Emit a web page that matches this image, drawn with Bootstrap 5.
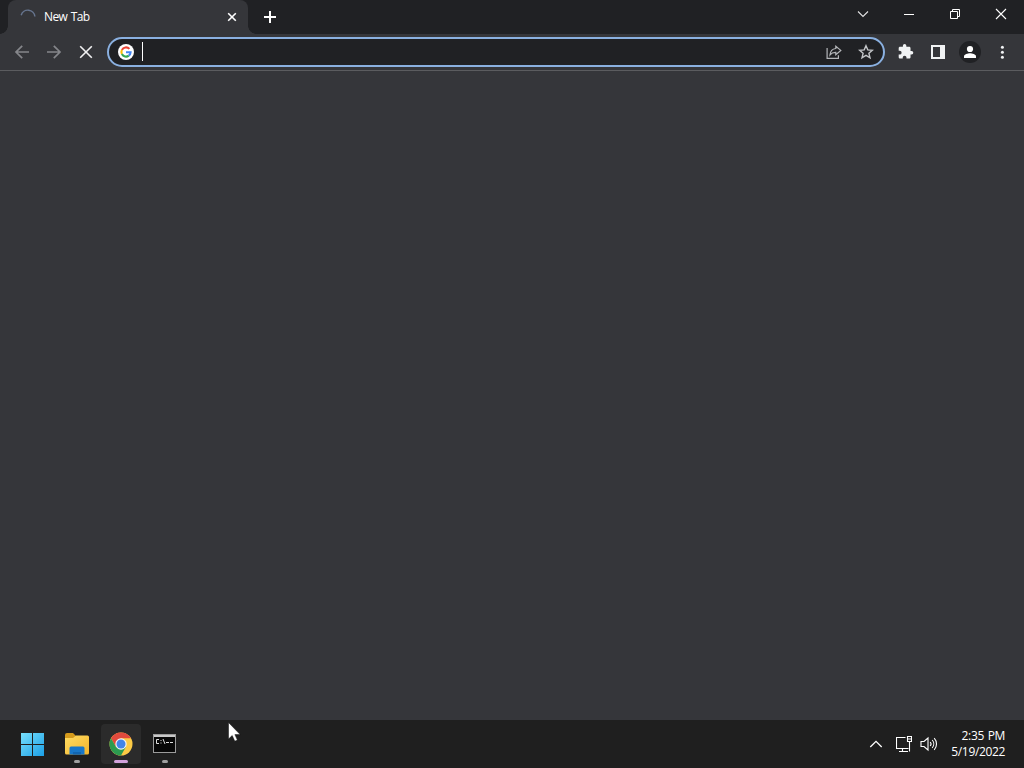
<!DOCTYPE html>
<html lang="en">
<head>
    <meta charset="UTF-8">
    <meta name="viewport" content="width=device-width, initial-scale=1.0">
    <title>New Tab</title>
    <link rel="stylesheet" href="https://cdn.jsdelivr.net/npm/bootstrap@5.3.0/dist/css/bootstrap.min.css">
    <style>
        body {
            height: 100vh;
            background: #35363a;
            font-family: "Open Sans", "Noto Sans", sans-serif;
            font-size: 12px;
            color: #fff;
            overflow: hidden;
        }
        svg {
            display: block;
            flex: none;
        }
        .tab-strip {
            height: 34px;
            background: #202124;
            padding-left: 8px;
        }
        .browser-tab {
            position: relative;
            width: 240px;
            height: 34px;
            padding: 0 9px 0 12px;
            background: #35363a;
            border-radius: 8px 8px 0 0;
        }
        /* curved feet of the active tab */
        .browser-tab::before,
        .browser-tab::after {
            content: "";
            position: absolute;
            bottom: 0;
            width: 8px;
            height: 8px;
        }
        .browser-tab::before {
            left: -8px;
            background: radial-gradient(circle at 0 0, transparent 7.5px, #35363a 8px);
        }
        .browser-tab::after {
            right: -8px;
            background: radial-gradient(circle at 100% 0, transparent 7.5px, #35363a 8px);
        }
        .tab-title {
            margin-left: 8px;
            font-size: 12px;
            line-height: 16px;
            letter-spacing: -0.6px;
            word-spacing: 1px;
        }
        .win-btn {
            width: 46px;
            height: 28px;
        }
        .toolbar {
            height: 37px;
            padding: 0 6px;
            border-bottom: 1px solid #5b5c5f;
        }
        .tool-btn {
            width: 32px;
            height: 32px;
        }
        .omnibox {
            height: 30px;
            margin: 0 5px;
            padding: 0 1px 0 9px;
            background: #202124;
            border: 2px solid #8ab0e0;
            border-radius: 15px;
        }
        .caret {
            width: 1px;
            height: 19px;
            margin: 0 0 2px 8px;
            background: #fff;
        }
        .taskbar {
            height: 48px;
            padding: 0 19px 0 11px;
            background: #1f1f1f;
        }
        .task-btn {
            position: relative;
            width: 44px;
            height: 48px;
        }
        .task-btn.active::before {
            content: "";
            position: absolute;
            inset: 4px 2px;
            background: #2b2b2b;
            border-radius: 4px;
        }
        .task-btn svg {
            position: relative;
        }
        .run-mark {
            position: absolute;
            bottom: 5px;
            left: 19px;
            width: 6px;
            height: 3px;
            background: #a0a0a0;
            border-radius: 2px;
        }
        .active .run-mark {
            left: 15px;
            width: 14px;
            background: #d3a2dc;
        }
        .tray-icons {
            margin: 0 12px 0 13px;
        }
        .clock {
            width: 55px;
            font-size: 12px;
            line-height: 16px;
            letter-spacing: -0.35px;
            word-spacing: 1px;
            white-space: nowrap;
        }
        .mouse-pointer {
            position: absolute;
            left: 228px;
            top: 722px;
        }
    </style>
</head>
<body class="d-flex flex-column">
    <header class="tab-strip d-flex">
        <div class="browser-tab d-flex align-items-center">
            <svg width="16" height="16" viewBox="0 0 16 16" fill="none" stroke="#66758f" stroke-width="1.5"><path d="M1.2 6.2A7 7 0 0 1 14.9 7.5"/></svg>
            <span class="tab-title">New Tab</span>
            <svg class="ms-auto" width="14" height="14" viewBox="0 0 14 14" stroke="#fff" stroke-width="1.6"><path d="M3.2 3.2l7.6 7.6M10.8 3.2l-7.6 7.6"/></svg>
        </div>
        <div class="d-flex align-items-center ms-3">
            <svg width="12" height="34" viewBox="0 0 12 34" stroke="#fff" stroke-width="2"><path d="M0 17h12M6 11v12"/></svg>
        </div>
        <div class="d-flex ms-auto">
            <div class="win-btn d-flex align-items-center justify-content-center">
                <svg width="12" height="12" viewBox="0 0 12 12" fill="none" stroke="#e2e2e3" stroke-width="1.1"><path d="M1 3.5l5 5 5-5"/></svg>
            </div>
            <div class="win-btn d-flex align-items-center justify-content-center">
                <svg width="10" height="10" viewBox="0 0 10 10" stroke="#fff"><path d="M0 5.5h10"/></svg>
            </div>
            <div class="win-btn d-flex align-items-center justify-content-center">
                <svg width="10" height="10" viewBox="0 0 10 10" fill="none" stroke="#fff"><path d="M.5 2.5h7v7h-7zM2.5 2.5v-2h7v7h-2"/></svg>
            </div>
            <div class="win-btn d-flex align-items-center justify-content-center">
                <svg width="12" height="12" viewBox="0 0 12 12" stroke="#fff" stroke-width="1.1"><path d="M1 1l10 10M11 1L1 11"/></svg>
            </div>
        </div>
    </header>

    <nav class="toolbar d-flex align-items-center">
        <div class="tool-btn d-flex align-items-center justify-content-center">
            <svg width="16" height="16" viewBox="0 0 16 16" fill="none" stroke="#85868a" stroke-width="1.7"><path d="M15 8H2.2M8.2 1.8L2 8l6.2 6.2"/></svg>
        </div>
        <div class="tool-btn d-flex align-items-center justify-content-center">
            <svg width="16" height="16" viewBox="0 0 16 16" fill="none" stroke="#85868a" stroke-width="1.7"><path d="M1 8h12.8M7.8 1.8L14 8l-6.2 6.2"/></svg>
        </div>
        <div class="tool-btn d-flex align-items-center justify-content-center">
            <svg width="16" height="16" viewBox="0 0 16 16" stroke="#f1f1f2" stroke-width="1.6"><path d="M2.2 2.2l11.6 11.6M13.8 2.2L2.2 13.8"/></svg>
        </div>

        <div class="omnibox flex-grow-1 d-flex align-items-center">
            <svg width="16" height="16" viewBox="0 0 16 16" fill="none" stroke-width="2.1">
                <circle cx="8" cy="8" r="8" fill="#fff"/>
                <path d="M11.4 4.9A4.6 4.6 0 0 0 3.9 5.9" stroke="#ea4335"/>
                <path d="M3.9 5.9a4.6 4.6 0 0 0 0 4.2" stroke="#fbbc05"/>
                <path d="M3.9 10.1a4.6 4.6 0 0 0 6.9 1.5" stroke="#34a853"/>
                <path d="M10.8 11.6a4.6 4.6 0 0 0 1.8-3.4H8" stroke="#4285f4"/>
            </svg>
            <span class="caret"></span>
            <div class="d-flex ms-auto">
                <div class="tool-btn d-flex align-items-center justify-content-center">
                    <svg width="16" height="16" viewBox="0 0 16 16" fill="none" stroke="#b4b6b9" stroke-width="1.2"><path d="M1.1 4v10.4h11.3v-3.2M9.8 2.2L14.8 6.4 9.8 10.6V8.3C7.2 8.2 5.4 9 4 10.9 4.3 7.2 6.2 4.9 9.8 4.5z"/></svg>
                </div>
                <div class="tool-btn d-flex align-items-center justify-content-center">
                    <svg width="16" height="16" viewBox="0 0 16 16" fill="none" stroke="#c4c6c9" stroke-width="1.4"><path d="M8 1.7l1.8 4.2 4.6.4-3.5 3 1.1 4.5L8 11.4l-4 2.4 1.1-4.5-3.5-3 4.6-.4z"/></svg>
                </div>
            </div>
        </div>

        <div class="tool-btn d-flex align-items-center justify-content-center">
            <svg width="16" height="16" viewBox="1 1 23 23" fill="#f1f3f4"><path d="M20.5 11H19V7c0-1.1-.9-2-2-2h-4V3.5a2.5 2.5 0 0 0-5 0V5H4c-1.1 0-2 .9-2 2v3.8h1.5a2.7 2.7 0 0 1 0 5.4H2V20c0 1.1.9 2 2 2h3.8v-1.5a2.7 2.7 0 0 1 5.4 0V22H17c1.1 0 2-.9 2-2v-4h1.5a2.5 2.5 0 0 0 0-5z"/></svg>
        </div>
        <div class="tool-btn d-flex align-items-center justify-content-center">
            <svg width="14" height="14" viewBox="0 0 14 14"><path fill="#f1f3f4" fill-rule="evenodd" d="M0 0h14v14H0zM2 2v10h7V2z"/></svg>
        </div>
        <div class="tool-btn d-flex align-items-center justify-content-center">
            <svg width="22" height="22" viewBox="0 0 22 22"><circle cx="11" cy="11" r="11" fill="#202124"/><g fill="#fff"><circle cx="11" cy="8" r="3.1"/><path d="M5 17v-1.6c0-2.1 3.9-3.1 6-3.1s6 1 6 3.1V17z"/></g></svg>
        </div>
        <div class="tool-btn d-flex align-items-center justify-content-center">
            <svg width="4" height="14" viewBox="0 0 4 14" fill="#f1f3f4"><circle cx="2.4" cy="2.3" r="1.5"/><circle cx="2.4" cy="7.3" r="1.5"/><circle cx="2.4" cy="12.3" r="1.5"/></svg>
        </div>
    </nav>

    <main class="flex-grow-1"></main>

    <footer class="taskbar d-flex align-items-center">
        <!-- Start -->
        <div class="task-btn d-flex align-items-center justify-content-center">
            <svg width="26" height="24" viewBox="0 0 26 24">
                <defs><linearGradient id="start-fill" gradientUnits="userSpaceOnUse" x1="0" y1="0" x2="24" y2="24"><stop offset="0" stop-color="#7be2fc"/><stop offset="1" stop-color="#1b9fe6"/></linearGradient></defs>
                <path fill="url(#start-fill)" d="M1 1h11v11H1zM13 1h11v11H13zM1 13h11v11H1zM13 13h11v11H13z"/>
            </svg>
        </div>
        <!-- File Explorer -->
        <div class="task-btn d-flex align-items-center justify-content-center">
            <svg width="24" height="24" viewBox="0 0 24 24">
                <defs><linearGradient id="folder-fill" x1="0" y1="0" x2="1" y2="1"><stop offset="0" stop-color="#ffdc62"/><stop offset="1" stop-color="#f3b52c"/></linearGradient></defs>
                <path fill="#d59b1c" d="M0 7V3q0-2 2-2h6l3 3v4H0z"/>
                <path fill="url(#folder-fill)" d="M0 6h8l3-2.5h11.5Q24 3.5 24 5v16q0 1.5-1.5 1.5h-21Q0 22.5 0 21z"/>
                <path fill="#1877c9" d="M4.5 22.500V16q0-1.500 1.500-1.500h12q1.500 0 1.500 1.500v6.500z"/>
                <path fill="#1265b0" d="M8 20h8v2.5H8z"/>
            </svg>
            <span class="run-mark"></span>
        </div>
        <!-- Chrome -->
        <div class="task-btn active d-flex align-items-center justify-content-center">
            <svg width="24" height="24" viewBox="0 0 24 24">
                <circle cx="12" cy="12" r="11.5" fill="#fccb45"/>
                <path fill="#e14a3d" d="M2.04 6.25A11.5 11.5 0 0 1 21.96 6.25H12L7 14.9z"/>
                <path fill="#2c9b50" d="M2.04 6.25A11.5 11.5 0 0 0 12 23.5L16.98 14.87 7 14.9z"/>
                <circle cx="12" cy="12" r="5.7" fill="#f4f4f4"/>
                <circle cx="12" cy="12" r="4.5" fill="#4285e8"/>
            </svg>
            <span class="run-mark"></span>
        </div>
        <!-- Command Prompt -->
        <div class="task-btn d-flex align-items-center justify-content-center">
            <svg width="24" height="20" viewBox="0 0 24 20">
                <path fill="#9b9b9b" d="M0 0h23v19H0z"/>
                <path fill="#c9c9c9" d="M1 1h21v2H1z"/>
                <path fill="#080808" d="M1 3h21v15H1z"/>
                <path fill="none" stroke="#dedede" d="M6 5.5H3.5v4H6M8 6v1M8 8.5v1M10 5l2 5M13 8.500h3M17 8.500h3"/>
            </svg>
            <span class="run-mark"></span>
        </div>

        <div class="d-flex align-items-center ms-auto">
            <svg width="14" height="14" viewBox="0 0 14 14" fill="none" stroke="#fff" stroke-width="1.3"><path d="M1.3 10L7 4.3 12.7 10"/></svg>
            <div class="tray-icons d-flex gap-2">
                <svg width="16" height="16" viewBox="0 0 16 16" fill="none" stroke="#fff" stroke-width="1.1"><path d="M9.5 1.5h-9v11h12M6.5 12.5v3M3 15.5h9M11.5.5h4v5h-4zM11.5 3h4M13.5 5.5v10"/></svg>
                <svg width="18" height="16" viewBox="0 0 18 16" fill="none" stroke="#fff" stroke-width="1.1"><path d="M1 5.5h3L8 2v12L4 10.5H1z"/><path d="M10.2 6a3 3 0 0 1 0 4M12.2 4a6 6 0 0 1 0 8M14.2 2.2a8.5 8.5 0 0 1 0 11.6"/></svg>
            </div>
            <div class="clock text-end">2:35 PM<br>5/19/2022</div>
        </div>
    </footer>

    <svg class="mouse-pointer" width="13" height="20" viewBox="0 0 13 20"><path fill="#fff" stroke="#111" stroke-width=".5" d="M.5.5V17l3.7-3.500 2.600 5.700 2.600-1.200-2.500-5.400h5.300z"/></svg>

    <script src="https://cdn.jsdelivr.net/npm/bootstrap@5.3.0/dist/js/bootstrap.bundle.min.js"></script>
</body>
</html>
